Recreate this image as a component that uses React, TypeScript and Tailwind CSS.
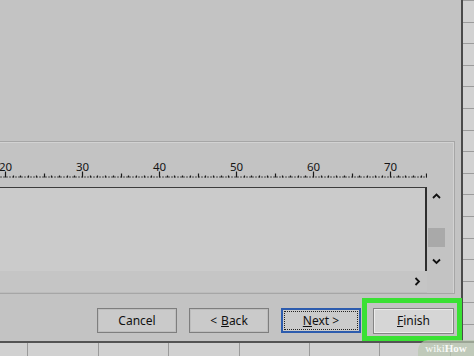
import React from "react";

const UI = "font-['Noto_Sans','Open_Sans',sans-serif]";

function Ruler() {
  const px = (u: number) => 5 + (u - 20) * 7.7;
  const ticks: React.ReactNode[] = [];
  for (let u = 20; u <= 75; u++) {
    const x = Math.round(Math.min(px(u), 426)) + 0.5;
    const h = u % 10 === 0 ? 6 : u % 5 === 0 ? 4 : 2;
    ticks.push(
      <line key={u} x1={x} x2={x} y1={35.5} y2={35.5 - h} stroke="#1a1a1a" strokeWidth={1.2} />
    );
  }
  return (
    <svg width={427} height={45} className="block">
      <line x1={0} x2={427} y1={35} y2={35} stroke="#4a4a4a" strokeWidth={1} strokeDasharray="2 1" />
      {ticks}
      {[20, 30, 40, 50, 60, 70].map((n) => (
        <text
          key={n}
          x={px(n) + 0.5}
          y={28.5}
          textAnchor="middle"
          fontSize={11.5}
          fill="#151515"
          fontFamily="'Noto Sans', 'Open Sans', sans-serif"
        >
          {n}
        </text>
      ))}
    </svg>
  );
}

function Chevron({ dir }: { dir: "up" | "down" | "right" }) {
  const d =
    dir === "up" ? "M1 5 L4.5 1.5 L8 5" : dir === "down" ? "M1 1.5 L4.5 5 L8 1.5" : "M1.5 1 L5 4.5 L1.5 8";
  const w = dir === "right" ? 7 : 9;
  const h = dir === "right" ? 9 : 7;
  return (
    <svg width={w} height={h} viewBox={`0 0 ${w} ${h}`}>
      <path d={d} fill="none" stroke="#111" strokeWidth={1.8} />
    </svg>
  );
}

function Btn({ children, kind }: { children: React.ReactNode; kind?: "focus" | "plain" }) {
  if (kind === "focus") {
    return (
      <div className="w-[80px] h-[25px] border-2 border-[#2d5cae] bg-[#cbcbcb] p-[1px]">
        <div className="h-full border border-dotted border-[#222] flex items-center justify-center text-[12px] text-[#111]">
          {children}
        </div>
      </div>
    );
  }
  return (
    <div className="w-[80px] h-[25px] border border-[#7e7e7e] bg-[#cacaca] shadow-[inset_0_0_0_1px_#bdbdbd] flex items-center justify-center text-[12px] text-[#111]">
      {children}
    </div>
  );
}

export default function App() {
  const stripRows = Array.from({ length: 16 });
  const cols = [28, 71, 70, 71, 70, 70, 71, 40];
  return (
    <div className={`relative w-[474px] h-[356px] overflow-hidden bg-[#c3c3c3] flex flex-col ${UI}`}>
      <div className="flex h-[341px]">
        {/* dialog */}
        <div className="w-[461px] flex flex-col">
          <div className="h-[141px]" />
          <div className="w-[455px] h-[153px] border-t border-r border-b border-[#a6a6a6] shadow-[inset_0_1px_0_#d2d2d2,inset_-1px_0_0_#d2d2d2] flex flex-col">
            <div className="h-[45px]">
              <Ruler />
            </div>
            <div className="flex h-[84px]">
              <div className="w-[427px] h-full border-t border-t-[#3c3c3c] border-r-2 border-r-[#2e2e2e] bg-[#cbcbcb]" />
              <div className="w-[19px] h-full flex flex-col items-center pt-[6px] pb-[6px]">
                <Chevron dir="up" />
                <div className="mt-[28px] w-[17px] h-[19px] bg-[#a9a9a9]" />
                <div className="mt-auto">
                  <Chevron dir="down" />
                </div>
              </div>
            </div>
            <div className="w-[427px] h-[22px] bg-[#c5c5c5] border-b border-[#bcbcbc] flex items-center justify-end pr-[6px]">
              <Chevron dir="right" />
            </div>
          </div>
          <div className="flex-1 flex items-start pt-[14px] pl-[97px] gap-[12px]">
            <Btn>Cancel</Btn>
            <Btn>
              &lt; <span className="underline ml-1">B</span>ack
            </Btn>
            <Btn kind="focus">
              <span className="underline">N</span>ext &gt;
            </Btn>
            <div className="w-[81px] h-[26px] border border-[#858585] bg-[#d6d6d6] shadow-[inset_0_0_0_1px_#ececec] flex items-center justify-center text-[12px] text-[#111]">
              <span className="underline">F</span>inish
            </div>
          </div>
        </div>
        <div className="w-[2px] bg-[#4b4b4b]" />
        {/* spreadsheet strip */}
        <div className="flex-1 bg-[#d2d2d2] flex flex-col">
          <div className="h-[15px] border-b border-[#9c9c9c]" />
          {stripRows.map((_, i) => (
            <div key={i} className="h-[21.6px] shrink-0 border-b border-[#9c9c9c]" />
          ))}
        </div>
      </div>
      {/* spreadsheet below dialog */}
      <div className="flex-1 border-t-2 border-[#545454] bg-[#d1d1d1] flex">
        {cols.map((w, i) => (
          <div key={i} style={{ width: w }} className="shrink-0 border-r border-[#9a9a9a]" />
        ))}
      </div>

      {/* highlight around Finish */}
      <div className="absolute left-[362px] top-[298px] w-[100px] h-[43px] border-[5px] border-[#3ae134]" />

      {/* watermark */}
      <div className="absolute right-0 bottom-0 w-[56px] h-[16px] bg-[#b9c8b0]/70 rounded-tl-[10px] flex items-center justify-center">
        <span className="font-['Liberation_Serif',serif] text-[11px] leading-none text-white/90">
          wiki<span className="font-bold">How</span>
        </span>
      </div>
    </div>
  );
}
